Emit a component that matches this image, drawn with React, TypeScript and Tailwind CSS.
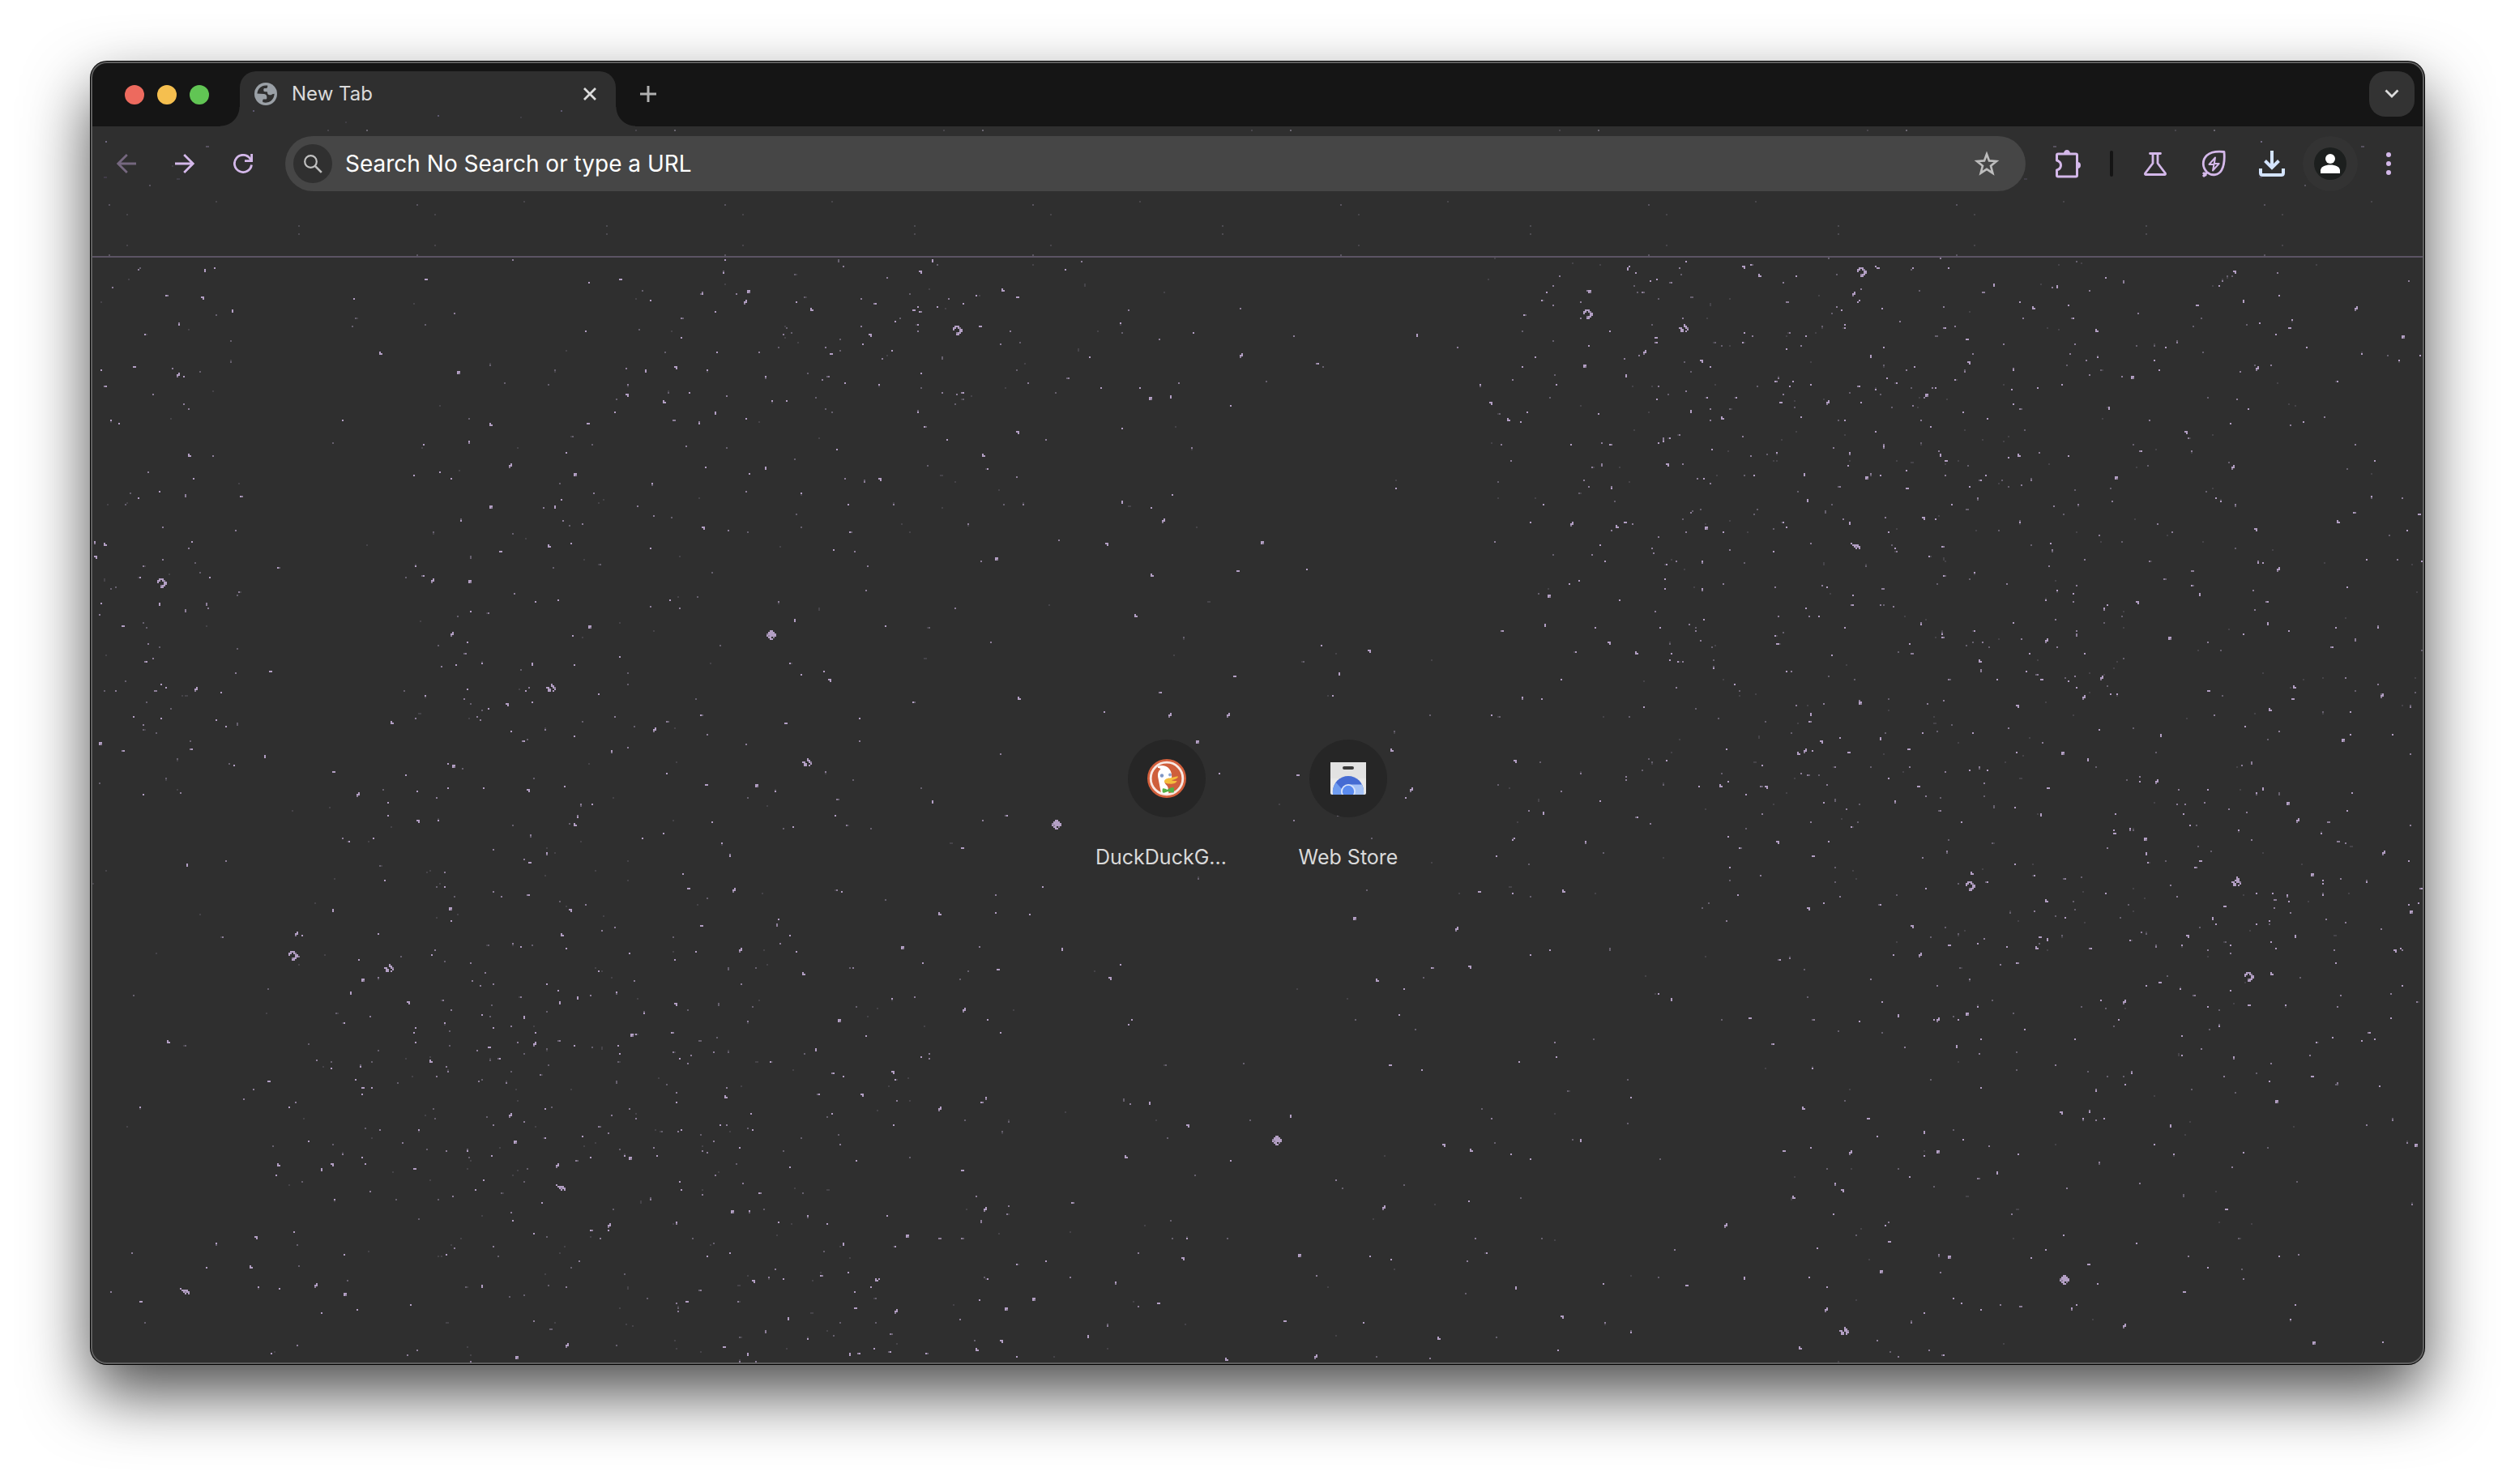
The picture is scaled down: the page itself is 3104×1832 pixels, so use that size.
import React from "react";

/* ---------- star field ---------- */

const FIELD_W = 1440;
const FIELD_H = 683;

// Stars per cell, 15 columns by 8 rows, over the whole field.
const DENSITY = [
  [14, 2, 5, 12, 20, 22, 12, 4, 2, 18, 26, 26, 20, 14, 10],
  [12, 1, 9, 14, 14, 12, 4, 2, 1, 18, 30, 26, 24, 14, 8],
  [18, 1, 12, 12, 6, 4, 2, 3, 1, 8, 26, 24, 24, 16, 10],
  [20, 2, 18, 14, 6, 2, 2, 3, 2, 12, 20, 24, 20, 16, 12],
  [3, 8, 16, 14, 8, 5, 2, 1, 4, 9, 8, 14, 20, 24, 22],
  [2, 14, 28, 22, 16, 10, 3, 1, 5, 5, 5, 10, 14, 18, 14],
  [2, 14, 24, 22, 20, 10, 5, 2, 5, 6, 2, 10, 10, 10, 4],
  [4, 8, 16, 16, 18, 14, 8, 3, 7, 5, 2, 14, 8, 5, 3],
];

// Bright stars, listed per quadrant on a 1568 x 1568 grid.
const QUADS: { ox: number; oy: number; pts: string }[] = [
  {
    ox: 0,
    oy: 0,
    pts: "154,45 149,123 388,278 58,320 116,335 494,332 745,330 785,320 770,415 711,70 878,130 883,103 1132,15 1115,48 1226,97 1195,204 1545,280 1423,405 1452,402 1245,502 1199,568 995,283 563,592 536,714 625,714 823,774 615,822 550,843 459,920 508,923 93,988 5,855 18,820 240,1182 484,1072 669,1053 947,1033 992,1204 1403,1020 1536,1195 1449,1300 1487,1380 1387,697 1365,819 1426,907 1541,895 1440,750 649,620 906,602 1060,637 1247,1256 934,1326 756,1340 893,1502 1132,1548 559,1270 403,1323 325,1464 359,1524 486,1448 235,1420 587,1515 131,567 43,1052 141,1227 11,1382 594,1157 719,398 537,480 667,480 1527,1300 1217,860 839,445 1046,226 969,152 449,70",
  },
  {
    ox: 1568,
    oy: 0,
    pts: "497,38 653,34 674,56 833,40 801,107 446,103 989,86 1312,50 1042,150 1261,145 1475,149 1538,230 215,226 313,420 337,465 535,237 520,271 438,313 495,341 596,301 625,462 703,420 765,413 898,395 825,285 955,304 1128,215 1387,210 1343,318 1174,348 1145,435 1246,500 1022,567 925,583 1309,598 1153,630 739,695 895,743 482,770 494,758 421,758 603,772 797,758 1340,778 1451,754 1561,734 1371,885 391,967 386,1048 471,1097 509,1124 697,1103 1059,1088 1224,1083 1267,960 1181,983 970,1149 1054,1202 1110,1251 809,1267 743,1302 756,1380 727,1412 794,1410 735,1400 1081,1412 1117,1428 1020,1275 1360,1284 1390,1257 1510,1246 1457,1372 1215,1361 345,1433 622,1501 887,1505 1208,1488 1385,1552 111,1185 149,1120 180,1400 53,1475 205,1509 5,813 838,1370 683,1507 1393,1220 1277,1237 1133,1195 818,632 736,622 550,595",
  },
  {
    ox: 0,
    oy: 1568,
    pts: "129,156 439,36 651,42 589,153 276,350 483,282 326,286 644,285 632,355 820,332 872,397 1091,392 1305,397 1368,478 1141,298 1171,113 863,227 365,484 350,520 426,549 457,712 535,677 595,661 726,641 654,535 785,552 957,465 1218,458 1173,566 1005,597 975,683 1077,746 103,658 238,772 564,866 569,943 311,1018 324,1006 252,1006 434,1020 626,1006 725,990 1424,833 1474,897 1390,982 1170,1026 1201,1130 1097,1208 1011,1231 220,1214 215,1295 126,1363 301,1345 340,1371 526,1352 889,1336 1055,1330 1027,1416 1139,846 1230,1415 1340,1494 1222,1505 1190,1531 850,1524 640,1514 571,1552 882,1542 1467,1272 1525,1555 801,1395 1082,1420 1267,1385 937,1441 1035,808 853,813 66,1398 696,1178 862,1141",
  },
  {
    ox: 1568,
    oy: 1568,
    pts: "385,12 699,95 410,231 298,237 267,336 129,308 557,540 284,449 161,484 662,595 914,593 953,582 940,672 879,331 1046,391 1051,365 890,411 1193,85 1194,124 1315,203 1316,193 1300,277 1512,123 1550,292 1394,358 1528,401 1363,465 1416,758 1164,545 1369,826 1228,895 1078,860 733,848 706,971 795,970 913,968 994,1030 785,1079 720,1100 819,877 629,1176 837,1307 654,1328 789,1478 729,1526 1117,1290 1163,1460 1557,953 45,867 250,950 287,965 178,725 169,1127 56,1263 348,1354 409,1439 242,1496 36,1452 77,1547 928,1266 435,937 740,283 1059,258 1266,151 1397,30 1417,187 1283,310 1250,360 959,180 1213,492 764,1414 1418,1512",
  },
];

const SHAPES: number[][][] = [
  [[0, 0], [0, 1]],
  [[0, 0], [1, 0], [1, 1]],
  [[0, 0], [0, 1], [1, 1]],
  [[0, 0], [1, 0]],
  [[1, 0], [0, 1], [1, 1], [0, 2]],
  [[0, 0], [1, 0], [0, 1], [1, 1]],
];

const RING = [[1, 0], [2, 0], [3, 0], [0, 1], [1, 1], [3, 1], [4, 1], [4, 2], [5, 2], [4, 3], [5, 3], [0, 2], [3, 4], [2, 4], [4, 4], [2, 5], [3, 5]];
const CROSS = [[3, 0], [3, 1], [4, 1], [0, 2], [1, 2], [4, 2], [5, 2], [1, 3], [2, 3], [5, 3], [1, 4], [2, 4], [4, 4]];
const FLOWER = [[2, 0], [3, 0], [1, 1], [2, 1], [3, 1], [4, 1], [0, 2], [1, 2], [2, 2], [3, 2], [4, 2], [5, 2], [0, 3], [1, 3], [2, 3], [3, 3], [4, 3], [5, 3], [1, 4], [2, 4], [4, 4], [2, 5], [3, 5]];
const WEDGE = [[0, 0], [1, 1], [2, 1], [3, 1], [4, 1], [2, 2], [3, 2], [4, 2], [5, 2], [3, 3], [5, 3]];

const FEATURES: [number, number, number[][]][] = [
  [532, 42, RING],
  [921, 32, RING],
  [980, 41, CROSS],
  [1086, 176, WEDGE],
  [1090, 6, RING],
  [41, 198, RING],
  [281, 263, CROSS],
  [417, 230, FLOWER],
  [439, 309, CROSS],
  [593, 347, FLOWER],
  [122, 428, RING],
  [181, 436, CROSS],
  [287, 572, WEDGE],
  [55, 636, WEDGE],
  [729, 542, FLOWER],
  [1157, 385, RING],
  [1321, 383, CROSS],
  [1329, 441, RING],
  [1215, 628, FLOWER],
  [1079, 660, CROSS],
];

const TONES = ["#464449", "#67616f", "#8d7f99", "#b39fc4"];

function buildField() {
  let seed = 20260;
  const rnd = () => {
    seed = (seed * 1664525 + 1013904223) % 4294967296;
    return seed / 4294967296;
  };
  const paths = TONES.map(() => [] as string[]);
  const dot = (x: number, y: number, tone: number) => paths[tone].push(`M${x} ${y}h1v1h-1z`);
  const pick = () => {
    const r = rnd();
    return r < 0.25 ? 0 : r < 0.48 ? 1 : r < 0.72 ? 2 : 3;
  };
  const cw = FIELD_W / 15;
  const ch = FIELD_H / 8;
  DENSITY.forEach((row, j) =>
    row.forEach((n, i) => {
      const total = Math.round(n * 1.6);
      for (let k = 0; k < total; k++) {
        const x = Math.floor((i + rnd()) * cw);
        const y = Math.floor((j + rnd()) * ch);
        const r = rnd();
        dot(x, y, pick());
        if (r < 0.1) dot(x + 1, y, pick());
        else if (r < 0.2) dot(x, y + 1, pick());
      }
    })
  );
  QUADS.forEach(({ ox, oy, pts }) =>
    pts.split(" ").forEach((p, i) => {
      const [u, v] = p.split(",").map(Number);
      const x = Math.floor(((u + ox) * FIELD_W) / 3136);
      const y = Math.floor(((v + oy) * 684) / 3136) - 2;
      SHAPES[i % SHAPES.length].forEach(([dx, dy], k) => dot(x + dx, y + dy, k < 3 ? 3 : 2));
    })
  );
  FEATURES.forEach(([x, y, cells]) =>
    cells.forEach(([dx, dy], k) => dot(x + dx, y + dy, k % 7 === 6 ? 2 : 3))
  );
  return paths.map((p) => p.join(""));
}

const FIELD = buildField();

function StarField() {
  return (
    <svg
      aria-hidden="true"
      className="absolute inset-0 h-full w-full"
      viewBox={`0 0 ${FIELD_W} ${FIELD_H}`}
      preserveAspectRatio="xMidYMid slice"
      shapeRendering="crispEdges"
    >
      {FIELD.map((d, i) => (
        <path key={i} d={d} fill={TONES[i]} />
      ))}
    </svg>
  );
}

const FRAME_DOTS: [number, number, number, string][] = [
  [18, 18, 2, "#6f6880"],
  [142, 24, 4, "#57525f"],
  [100, 48, 2, "#403e44"],
  [16, 62, 4, "#413c48"],
  [106, 64, 4, "#403e47"],
  [72, 72, 2, "#59545f"],
  [22, 96, 2, "#59545f"],
  [154, 92, 2, "#48464b"],
  [44, 108, 2, "#48464b"],
  [256, 122, 2, "#4e4c52"],
  [256, 132, 2, "#4e4c52"],
  [44, 146, 2, "#48464b"],
  [22, 158, 2, "#59545f"],
  [292, 4, 2, "#48464b"],
  [340, 4, 2, "#6a6670"],
];

function FrameTexture() {
  return (
    <svg aria-hidden="true" className="absolute inset-0 h-full w-full" shapeRendering="crispEdges">
      <defs>
        <pattern id="frame-dots" width="380" height="160" patternUnits="userSpaceOnUse">
          {FRAME_DOTS.map(([x, y, w, c], i) => (
            <rect key={i} x={x} y={y} width={w} height="2" fill={c} />
          ))}
        </pattern>
      </defs>
      <rect width="100%" height="100%" fill="url(#frame-dots)" />
    </svg>
  );
}

/* ---------- icons ---------- */

const LILAC = "#d4b8ea";

function GlobeIcon() {
  return (
    <svg width="28" height="28" viewBox="0 0 28 28" aria-hidden="true">
      <circle cx="14" cy="14" r="14" fill="#9aa0a6" />
      <path
        fill="#2f2f2f"
        d="M3.4 13.6A10.7 10.7 0 0 1 16.2 3.6v1.2c0 1.4-.8 2.3-2.2 2.3h-1.3c-.9 0-1.4.6-1.4 1.4v1.3c0 .9.7 1.4 1.6 1.4h1.9c.8 0 1.3.5 1.3 1.3 0 1.7 1.1 2.7 2.7 2.7h1.5c.7 0 1.2-.3 1.6-.9l2.7-.5A10.7 10.7 0 0 1 10.200 24v-2c0-1 .6-1.5 1.4-1.5h2.1c1 0 1.6-.7 1.6-1.6v-1.1c0-2.3-1.5-3.8-3.8-3.8z"
      />
    </svg>
  );
}

function ArrowIcon({ color, flip }: { color: string; flip?: boolean }) {
  return (
    <svg width="24" height="24" viewBox="0 0 24 24" fill="none" stroke={color} strokeWidth="2.8" aria-hidden="true" className={flip ? "rotate-180" : ""}>
      <path d="M24 12H2M12.8 1 1.8 12l11 11" />
    </svg>
  );
}

function ReloadIcon() {
  return (
    <svg width="24" height="24" viewBox="0 0 24 24" fill="none" stroke={LILAC} strokeWidth="2.800" aria-hidden="true">
      <path d="M22.5 13.5A10.6 10.6 0 1 1 20.8 6L22.5 8.3" />
      <path d="M22.600 0v8.600H14" />
    </svg>
  );
}

function SearchIcon() {
  return (
    <svg width="24" height="24" viewBox="0 0 24 24" fill="none" stroke="#c0c0c0" strokeWidth="2.2" aria-hidden="true">
      <circle cx="9.5" cy="9.5" r="7.3" />
      <path d="m14.8 14.8 8 8" strokeWidth="2.6" />
    </svg>
  );
}

function StarIcon() {
  return (
    <svg width="32" height="32" viewBox="0 0 32 32" fill="none" stroke="#bdbdbd" strokeWidth="2.6" aria-hidden="true">
      <path d="m16 4.200 3 8.200 9 .6-7 5.700 2.400 9L16 22.800l-7.400 4.900 2.400-9-7-5.700 9-.6z" />
    </svg>
  );
}

function PuzzleIcon() {
  return (
    <svg width="34" height="38" viewBox="0 0 34 38" fill="none" stroke={LILAC} strokeWidth="3" strokeLinejoin="round" aria-hidden="true">
      <path d="M3.500 8.500q0-1.500 1.500-1.500h22q1.500 0 1.500 1.500v25q0 1.500-1.500 1.500H5q-1.500 0-1.500-1.500V27q5-1.500 5-6t-5-6z" />
      <path d="M12 6.500a4 4.500 0 0 1 8 0zM29 17a4 4 0 0 1 0 8z" fill={LILAC} stroke="none" />
    </svg>
  );
}

function FlaskIcon() {
  return (
    <svg width="30" height="30" viewBox="0 0 30 30" fill="none" stroke={LILAC} strokeWidth="2.8" strokeLinejoin="round" strokeLinecap="round" aria-hidden="true">
      <path d="M8.500 2.500h13M12 2.500v12L2.500 27q-.4 1.500 1 1.500h23q1.400 0 1-1.500L18 14.500v-12" />
    </svg>
  );
}

function LeafIcon() {
  return (
    <svg width="30" height="34" viewBox="0 0 30 34" fill="none" stroke={LILAC} strokeWidth="2.800" strokeLinejoin="round" aria-hidden="true">
      <path d="M28 2.500c.8 9.500 0 17-3.200 22.600C21.500 31 13 33 6.800 27.500.8 21.500.8 12.500 6.500 7 11.500 2.500 19 1.500 28 2.500z" />
      <path d="M7.500 27 2 33M2 28l4 4" strokeWidth="3" />
      <path d="m17 9.500-7.500 8.500h6L14 25.500l7.700-8.500h-6z" strokeWidth="2" />
    </svg>
  );
}

function DownloadIcon() {
  return (
    <svg width="32" height="32" viewBox="0 0 32 32" fill="none" stroke="#d3e3fd" strokeWidth="4" aria-hidden="true">
      <path d="M16 0v20" />
      <path d="m7.500 12.500 8.500 8.500 8.500-8.500" />
      <path d="M2 22v5.500Q2 30 4.500 30h23q2.500 0 2.500-2.500V22" />
    </svg>
  );
}

function ProfileIcon() {
  return (
    <svg width="40" height="40" viewBox="0 0 40 40" aria-hidden="true">
      <circle cx="20" cy="20" r="20" fill="#1c1f1e" />
      <circle cx="20" cy="14" r="6" fill="#fff" />
      <path d="M8 32v-3.500c0-4.500 6-7 12-7s12 2.500 12 7V32z" fill="#fff" />
    </svg>
  );
}

function MenuIcon() {
  return (
    <svg width="6" height="28" viewBox="0 0 6 28" fill={LILAC} aria-hidden="true">
      <circle cx="3" cy="3" r="3" />
      <circle cx="3" cy="14" r="3" />
      <circle cx="3" cy="25" r="3" />
    </svg>
  );
}

function DuckIcon() {
  return (
    <svg width="48" height="48" viewBox="0 0 48 48" aria-hidden="true">
      <circle cx="24" cy="24" r="24" fill="#d4603c" />
      <circle cx="24" cy="24" r="19.800" fill="#cf5f3c" stroke="#f8e9e4" strokeWidth="2.800" />
      <path d="M13 9c4-2 11-1 14 3 3 3.500 3.500 8 3 12-2 2-8 1-8.500 4-.3 3 3 4 4 7l1 7.500c-3 1-7 .5-9.500-.5L13.500 24c-1-5-.5-9 3-11.500-1-1.500-2.500-1.500-3.500-1.500z" fill="#fff" />
      <circle cx="18" cy="20.500" r="2.200" fill="#7f96c4" />
      <circle cx="28" cy="19.500" r="1.900" fill="#8fa3cc" />
      <path d="M21 27c1-3 5-3.500 8-3.800 3.500-.4 6-2.200 9-1.700-.5 3-4.500 3.700-8 4.700 2 .8 4.500.8 6.500.8-.8 3.300-6 4-10 3.600-3-.4-6-1.100-5.500-3.600z" fill="#f4bd3c" />
      <path d="M19 36.500c1.500-.5 4 .5 5.500 1.500 2-1.800 6-3.500 8-3 .8 1.500.8 5 0 6.500-2 .3-5-.8-7-1.500-2 1-4.500 2-6.500 1.500-.6-1.500-.6-3.500 0-5z" fill="#55b045" />
    </svg>
  );
}

function WebStoreIcon() {
  return (
    <svg width="46" height="40" viewBox="0 0 46 40" aria-hidden="true">
      <defs>
        <clipPath id="store-bag">
          <path d="M1 0h44v38q0 2-2 2H3q-2 0-2-2z" />
        </clipPath>
      </defs>
      <g clipPath="url(#store-bag)">
        <rect width="46" height="40" fill="#e9e9e9" />
        <rect width="46" height="20" fill="#e2e2e2" />
        <circle cx="23" cy="36" r="19" fill="#456bd3" />
        <path d="M8 25a19 19 0 0 0-4 15h14l-3-7z" fill="#6f9cf0" />
        <path d="M23 27.500h17q3 6 2 13H27z" fill="#a5c2f7" />
        <circle cx="23" cy="36" r="9" fill="#d8e3fa" />
        <circle cx="23" cy="36" r="7.200" fill="#5a8bf0" />
      </g>
      <rect x="16" y="5" width="14" height="4" rx="2" fill="#3a3a3a" />
    </svg>
  );
}

/* ---------- pieces ---------- */

function ToolButton({ label, children, disabled }: { label: string; children: React.ReactNode; disabled?: boolean }) {
  return (
    <button type="button" aria-label={label} disabled={disabled} className="flex h-[68px] w-[72px] shrink-0 items-center justify-center">
      {children}
    </button>
  );
}

function TabStrip() {
  return (
    <header className="flex h-20 items-end bg-[#151515]">
      <div className="flex h-20 w-[184px] shrink-0 items-center gap-4 pt-0.5 pl-[42px]">
        <button type="button" aria-label="Close window" className="size-6 rounded-full bg-[#ed6a5e]" />
        <button type="button" aria-label="Minimize window" className="size-6 rounded-full bg-[#f5bf4f]" />
        <button type="button" aria-label="Zoom window" className="size-6 rounded-full bg-[#61c554]" />
      </div>
      <div className="relative flex h-[68px] w-[464px] items-center rounded-t-[20px] bg-[#2f2f2f] pr-3 pb-3 pl-[18px]">
        <span className="absolute bottom-0 -left-6 size-6 bg-[radial-gradient(circle_at_0_0,transparent_23px,#2f2f2f_24px)]" />
        <span className="absolute -right-6 bottom-0 size-6 bg-[radial-gradient(circle_at_100%_0,transparent_23px,#2f2f2f_24px)]" />
        <svg aria-hidden="true" className="absolute inset-0 h-full w-full" shapeRendering="crispEdges">
          <path d="M16 48h2v2h-2zM244 54h2v2h-2zM396 48h2v2h-2z" fill="#5d5870" />
          <path d="M130 62h2v2h-2zM346 56h2v2h-2z" fill="#403e44" />
        </svg>
        <GlobeIcon />
        <span className="ml-[18px] flex-1 text-[24px] leading-8 text-[#dadada]">New Tab</span>
        <button type="button" aria-label="Close tab" className="flex size-10 items-center justify-center">
          <svg width="16" height="16" viewBox="0 0 16 16" stroke="#dcdcdc" strokeWidth="2.800" aria-hidden="true">
            <path d="m1 1 14 14M15 1 1 15" />
          </svg>
        </button>
      </div>
      <button type="button" aria-label="New tab" className="mb-3 ml-3 flex size-14 items-center justify-center">
        <svg width="20" height="20" viewBox="0 0 20 20" stroke="#b0b0b0" strokeWidth="3" aria-hidden="true">
          <path d="M10 0v20M0 10h20" />
        </svg>
      </button>
      <button type="button" aria-label="Search tabs" className="mr-3 mb-3 ml-auto flex size-14 items-center justify-center rounded-[20px] bg-[#333333]">
        <svg width="18" height="12" viewBox="0 0 18 12" fill="none" stroke="#dcdcdc" strokeWidth="2.800" aria-hidden="true">
          <path d="m1.500 1.500 7.500 7.500 7.500-7.500" />
        </svg>
      </button>
    </header>
  );
}

function Toolbar() {
  return (
    <nav aria-label="Browser toolbar" className="relative h-40 shrink-0 px-2 pt-3">
      <FrameTexture />
      <div className="relative flex items-center">
        <ToolButton label="Back" disabled>
          <ArrowIcon color="#75677f" />
        </ToolButton>
        <ToolButton label="Forward">
          <ArrowIcon color={LILAC} flip />
        </ToolButton>
        <ToolButton label="Reload">
          <ReloadIcon />
        </ToolButton>
        <div className="ml-4 flex h-[68px] flex-1 items-center rounded-full bg-[#464646] pr-3 pl-[10px]">
          <button type="button" aria-label="Site search" className="flex size-12 items-center justify-center rounded-full bg-[#303030]">
            <SearchIcon />
          </button>
          <input
            type="text"
            aria-label="Address and search bar"
            placeholder="Search No Search or type a URL"
            className="ml-4 h-12 flex-1 bg-transparent text-[28px] text-white outline-none placeholder:text-white"
          />
          <button type="button" aria-label="Bookmark this tab" className="flex h-12 w-[72px] items-center justify-center">
            <StarIcon />
          </button>
        </div>
        <div className="ml-4 flex items-center">
          <ToolButton label="Extensions">
            <PuzzleIcon />
          </ToolButton>
          <span className="mx-4 h-8 w-1 rounded-full bg-[#151515]" />
          <ToolButton label="Experiments">
            <FlaskIcon />
          </ToolButton>
          <ToolButton label="Energy saver">
            <LeafIcon />
          </ToolButton>
          <ToolButton label="Downloads">
            <DownloadIcon />
          </ToolButton>
          <ToolButton label="Profile">
            <span className="flex size-[68px] items-center justify-center rounded-full bg-[#333333]">
              <ProfileIcon />
            </span>
          </ToolButton>
          <ToolButton label="Menu">
            <MenuIcon />
          </ToolButton>
        </div>
      </div>
    </nav>
  );
}

function Shortcut({ title, truncated, children }: { title: string; truncated?: boolean; children: React.ReactNode }) {
  return (
    <a href="#" className="flex w-56 flex-col items-center">
      <span className="flex size-24 items-center justify-center rounded-full bg-[#262626]">{children}</span>
      <span
        className={
          truncated
            ? "mt-[33px] w-44 bg-[#2f2f2f] text-left text-[25px] leading-8 text-[#dadada]"
            : "mt-[33px] w-36 bg-[#2f2f2f] text-center text-[25px] leading-8 text-[#dadada]"
        }
      >
        {title}
      </span>
    </a>
  );
}

export default function App() {
  return (
    <div className="flex min-h-screen flex-col bg-white px-28 pt-[76px] pb-[148px] font-['Inter','Liberation_Sans',sans-serif]">
      <div className="relative flex flex-1 flex-col overflow-hidden rounded-[20px] bg-[#2f2f2f] shadow-[0_0_0_1px_#000000,0_36px_80px_rgba(0,0,0,0.7)]">
        <TabStrip />
        <Toolbar />
        <main className="relative flex flex-1 items-start justify-center border-t-2 border-[#5b5464] pt-[595px]">
          <StarField />
          <div className="relative flex">
            <Shortcut title="DuckDuckG..." truncated>
              <DuckIcon />
            </Shortcut>
            <Shortcut title="Web Store">
              <WebStoreIcon />
            </Shortcut>
          </div>
        </main>
        <span className="pointer-events-none absolute inset-0 rounded-[20px] border-2 border-[#5f5f5f]" />
      </div>
    </div>
  );
}
